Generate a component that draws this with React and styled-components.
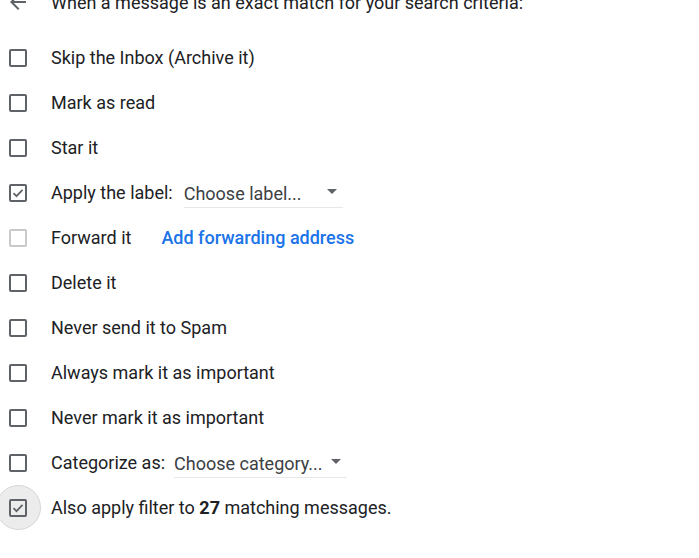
import React from "react";
import styled, { createGlobalStyle } from "styled-components";

const Global = createGlobalStyle`
  html, body { margin: 0; padding: 0; background: #fff; }
  body { font-family: Roboto, "Noto Sans", Arial, sans-serif; color: #202124; }
`;

const Page = styled.div`
  width: 699px;
  height: 558px;
  overflow: hidden;
  background: #fff;
`;

const Header = styled.div`
  display: flex;
  align-items: center;
  height: 24px;
  margin-top: -10px;
  margin-bottom: 21px;
  font-size: 18px;
  color: #202124;
`;

const Back = styled.div`
  width: 51px;
  display: flex;
  justify-content: flex-start;
  padding-left: 6px;
  box-sizing: border-box;
  color: #5f6368;
`;

const List = styled.div`
  display: flex;
  flex-direction: column;
`;

const Row = styled.div`
  display: flex;
  align-items: center;
  height: 45px;
  font-size: 18px;
  white-space: nowrap;
`;

const BoxCell = styled.div`
  position: relative;
  width: 51px;
  height: 45px;
  flex: none;
  display: flex;
  align-items: center;
  padding-left: 9px;
  box-sizing: border-box;
`;

const Halo = styled.div`
  position: absolute;
  left: -4px;
  top: 0px;
  width: 45px;
  height: 45px;
  border-radius: 50%;
  background: #ececec;
  border: 1px solid #d6d6d6;
  box-sizing: border-box;
`;

const Box = styled.div`
  position: relative;
  width: 18px;
  height: 18px;
  box-sizing: border-box;
  border: 2px solid ${(p) => (p.$disabled ? "#c9c9c9" : "#5f6368")};
  border-radius: 2px;
  display: flex;
  align-items: center;
  justify-content: center;
`;

const Label = styled.span`
  color: #202124;
`;

const Link = styled.span`
  color: #1a73e8;
  font-weight: 500;
  margin-left: 30px;
`;

const Select = styled.div`
  display: flex;
  align-items: center;
  justify-content: space-between;
  margin-left: ${(p) => p.$ml}px;
  width: ${(p) => p.$w}px;
  height: 28px;
  border-bottom: 1px solid #e6e8eb;
  box-sizing: border-box;
  color: #3c4043;
  margin-top: 3px;
`;

const Caret = styled.span`
  width: 0;
  height: 0;
  border-left: 5px solid transparent;
  border-right: 5px solid transparent;
  border-top: 5px solid #5f6368;
  margin-right: ${(p) => p.$mr}px;
  margin-bottom: 4px;
`;

const Check = () => (
  <svg width="12" height="10" viewBox="0 0 12 10">
    <path d="M1.5 5.2 L4.5 8.2 L10.5 1.8" fill="none" stroke="#5f6368" strokeWidth="1.8" />
  </svg>
);

function CheckBox({ checked, disabled, halo }) {
  return (
    <BoxCell>
      {halo && <Halo />}
      <Box $disabled={disabled}>{checked && <Check />}</Box>
    </BoxCell>
  );
}

export default function App() {
  return (
    <Page>
      <Global />
      <Header>
        <Back>
          <svg width="24" height="24" viewBox="0 0 24 24">
            <path d="M20 11H7.83l5.59-5.59L12 4l-8 8 8 8 1.41-1.41L7.83 13H20v-2z" fill="#5f6368" />
          </svg>
        </Back>
        <span>When a message is an exact match for your search criteria:</span>
      </Header>
      <List>
        <Row><CheckBox /><Label>Skip the Inbox (Archive it)</Label></Row>
        <Row><CheckBox /><Label>Mark as read</Label></Row>
        <Row><CheckBox /><Label>Star it</Label></Row>
        <Row>
          <CheckBox checked />
          <Label>Apply the label:</Label>
          <Select $ml={11} $w={159}>
            <span>Choose label...</span>
            <Caret $mr={6} />
          </Select>
        </Row>
        <Row>
          <CheckBox disabled />
          <Label>Forward it</Label>
          <Link>Add forwarding address</Link>
        </Row>
        <Row><CheckBox /><Label>Delete it</Label></Row>
        <Row><CheckBox /><Label>Never send it to Spam</Label></Row>
        <Row><CheckBox /><Label>Always mark it as important</Label></Row>
        <Row><CheckBox /><Label>Never mark it as important</Label></Row>
        <Row>
          <CheckBox />
          <Label>Categorize as:</Label>
          <Select $ml={9} $w={173}>
            <span>Choose category...</span>
            <Caret $mr={6} />
          </Select>
        </Row>
        <Row>
          <CheckBox checked halo />
          <Label>Also apply filter to <b>27</b> matching messages.</Label>
        </Row>
      </List>
    </Page>
  );
}
